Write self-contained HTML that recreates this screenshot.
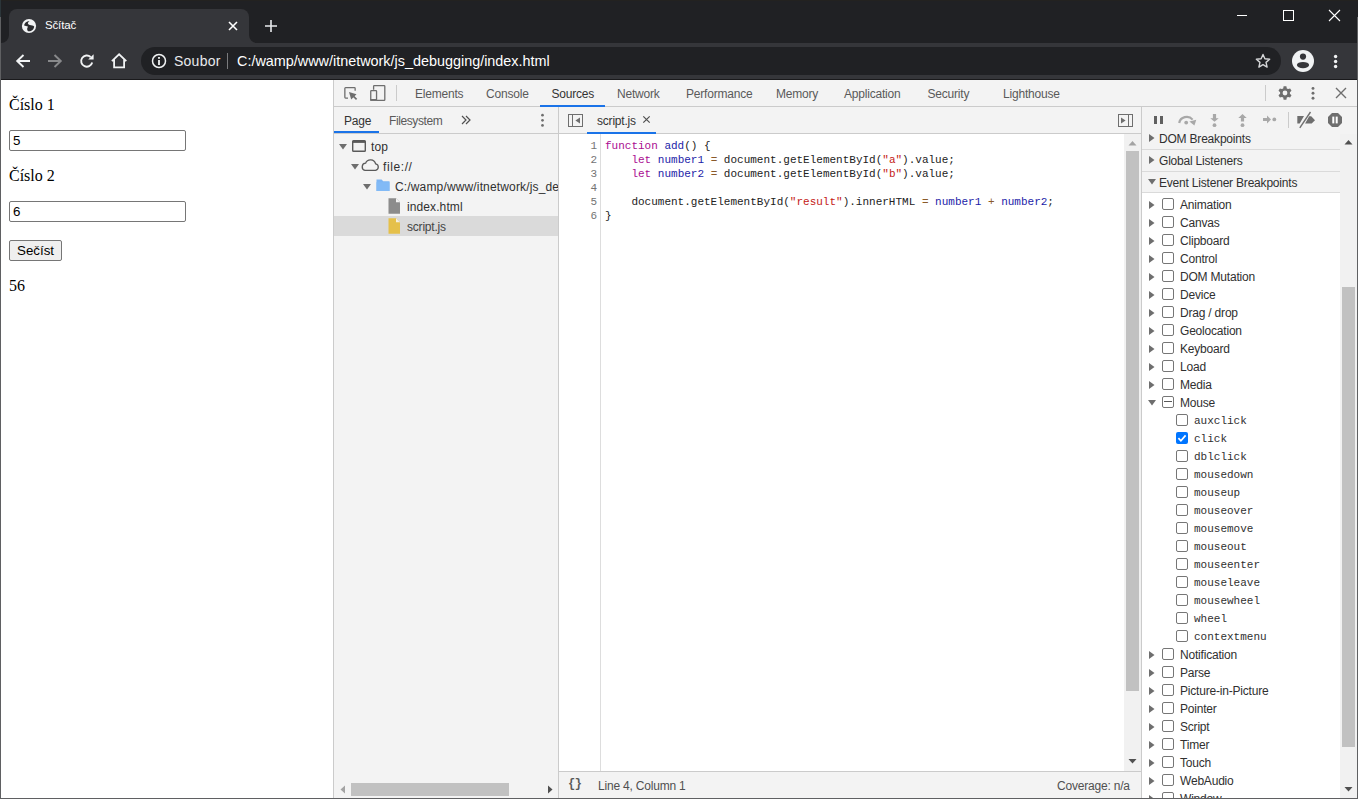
<!DOCTYPE html>
<html><head><meta charset="utf-8">
<style>
*{box-sizing:border-box;margin:0;padding:0}
html,body{width:1358px;height:799px;overflow:hidden;background:#202124;font-family:"Liberation Sans",sans-serif}
.a{position:absolute}
#win{position:absolute;left:0;top:0;width:1358px;height:799px;background:#202124}
.frameL{left:0;top:17px;width:1px;height:782px;background:#5f6062}
.frameR{left:1357px;top:17px;width:1px;height:782px;background:#5f6062}
.frameB{left:0;top:798px;width:1358px;height:1px;background:#5f6062}
#tab{left:9px;top:9px;width:240px;height:34px;background:#35363a;border-radius:8px 8px 0 0}
#toolbar{left:1px;top:43px;width:1356px;height:36px;background:#35363a}
#omni{left:141px;top:47px;width:1140px;height:28px;background:#202124;border-radius:14px}
#page{left:1px;top:80px;width:332px;height:718px;background:#fff}
#dt{left:333px;top:80px;width:1024px;height:718px;background:#f3f3f3;border-left:1px solid #cbcbcb}
.dtt{font-size:12px;line-height:15px;white-space:nowrap;letter-spacing:-0.2px}
.mono{font-family:"Liberation Mono",monospace;font-size:11px;line-height:14px;white-space:pre}
.code{color:#222}
.kw{color:#aa0d91}.op{color:#8a5a2a}.df{color:#1c1ca8}.st{color:#c41a16}
.cb{width:12px;height:12px;border:1px solid #767676;border-radius:2px;background:#fff}
.serif{font-family:"Liberation Serif",serif;font-size:16px;color:#000}
</style></head><body>
<div id="win">
  <!-- title bar -->
  <div class="a" id="tab"></div>
  <!-- tab bottom curves -->
  <svg class="a" style="left:1px;top:35px" width="8" height="8"><path d="M8 0 V8 H0 A8 8 0 0 0 8 0Z" fill="#35363a"/></svg>
  <svg class="a" style="left:249px;top:35px" width="8" height="8"><path d="M0 0 V8 H8 A8 8 0 0 1 0 0Z" fill="#35363a"/></svg>
  <!-- favicon globe -->
  <svg class="a" style="left:21px;top:18px" width="16" height="16" viewBox="0 0 16 16">
    <circle cx="8" cy="8" r="7.1" fill="#f1f3f4"/>
    <path d="M3.1 7.4 C3.2 5.2 5.2 3.2 8.6 2.9 C7.3 3.9 6.7 4.8 6.9 5.6 C7.2 6.5 8 7 8.8 7.1 C10.5 7.3 12 7.6 13.2 8.4 C13.1 10.6 11.6 12.6 9.2 13.2 L7.2 13.3 C6.3 12.3 6 11.2 6.2 10.4 C6.5 9.5 6.9 9 6.9 8.6 C5.5 8 4.3 7.6 3.1 7.4Z" fill="#2a2b2e"/>
  </svg>
  <div class="a" style="left:45px;top:19px;font-size:11.5px;color:#fff;letter-spacing:-0.15px">Sčítač</div>
  <!-- tab close -->
  <svg class="a" style="left:227px;top:20px" width="12" height="12" viewBox="0 0 12 12"><path d="M2 2 L10 10 M10 2 L2 10" stroke="#fff" stroke-width="1.6"/></svg>
  <!-- new tab -->
  <svg class="a" style="left:264px;top:19px" width="14" height="14" viewBox="0 0 14 14"><path d="M7 1 V13 M1 7 H13" stroke="#e8eaed" stroke-width="1.6"/></svg>
  <!-- window controls -->
  <div class="a" style="left:1237px;top:15px;width:10px;height:1px;background:#fff"></div>
  <div class="a" style="left:1283px;top:10px;width:11px;height:11px;border:1px solid #fff"></div>
  <svg class="a" style="left:1328px;top:9px" width="13" height="13" viewBox="0 0 13 13"><path d="M1 1 L12 12 M12 1 L1 12" stroke="#fff" stroke-width="1.1"/></svg>

  <div class="a" id="toolbar"></div>
  <!-- back -->
  <svg class="a" style="left:15px;top:53px" width="16" height="16" viewBox="0 0 16 16"><path d="M15 8 H2.5 M8.5 2 L2.2 8 L8.5 14" fill="none" stroke="#f1f3f4" stroke-width="1.9"/></svg>
  <!-- forward -->
  <svg class="a" style="left:47px;top:53px" width="16" height="16" viewBox="0 0 16 16"><path d="M1 8 H13.5 M7.5 2 L13.8 8 L7.5 14" fill="none" stroke="#88898b" stroke-width="1.9"/></svg>
  <!-- reload -->
  <svg class="a" style="left:79px;top:53px" width="16" height="16" viewBox="0 0 16 16"><path d="M13.2 9.5 A5.6 5.6 0 1 1 11.6 4" fill="none" stroke="#f1f3f4" stroke-width="1.9"/><path d="M9.2 6.6 H14.6 V1.2Z" fill="#f1f3f4"/></svg>
  <!-- home -->
  <svg class="a" style="left:110px;top:52px" width="18" height="17" viewBox="0 0 18 17"><path d="M1.9 9.2 L9.1 2.3 L16.3 9.2 M4.1 7.4 V15.3 H14.1 V7.4" fill="none" stroke="#f1f3f4" stroke-width="1.8" stroke-linejoin="miter"/></svg>
  <div class="a" id="omni"></div>
  <!-- info icon -->
  <svg class="a" style="left:151px;top:53px" width="16" height="16" viewBox="0 0 16 16"><circle cx="8" cy="8" r="6.5" fill="none" stroke="#f1f3f4" stroke-width="1.5"/><rect x="7.1" y="7" width="1.8" height="5" fill="#f1f3f4"/><rect x="7.1" y="4" width="1.8" height="1.8" fill="#f1f3f4"/></svg>
  <div class="a" style="left:174px;top:53px;font-size:14px;color:#e8eaed;letter-spacing:0.25px">Soubor</div>
  <div class="a" style="left:227px;top:53px;width:1px;height:16px;background:#7a7b7d"></div>
  <div class="a" style="left:237px;top:53px;font-size:14.4px;color:#fff;white-space:nowrap">C:/wamp/www/itnetwork/js_debugging/index.html</div>
  <!-- star -->
  <svg class="a" style="left:1254px;top:53px" width="18" height="17" viewBox="0 0 18 17"><path d="M9.00 1.40 L10.88 5.81 L15.66 6.24 L12.04 9.39 L13.11 14.06 L9.00 11.60 L4.89 14.06 L5.96 9.39 L2.34 6.24 L7.12 5.81Z" fill="none" stroke="#d5d6d8" stroke-width="1.4" stroke-linejoin="round"/></svg>
  <!-- profile -->
  <svg class="a" style="left:1291px;top:49px" width="24" height="24" viewBox="0 0 24 24"><circle cx="12" cy="12" r="11" fill="#f1f3f4"/><circle cx="12" cy="7.6" r="3.1" fill="#35363a"/><ellipse cx="12" cy="16.1" rx="6.1" ry="3.2" fill="#35363a"/></svg>
  <!-- kebab -->
  <svg class="a" style="left:1332px;top:53px" width="8" height="17" viewBox="0 0 8 17"><circle cx="3.6" cy="3.5" r="1.7" fill="#f1f3f4"/><circle cx="3.6" cy="8.5" r="1.7" fill="#f1f3f4"/><circle cx="3.6" cy="13.5" r="1.7" fill="#f1f3f4"/></svg>
  <div class="a" style="left:1px;top:79px;width:1356px;height:1px;background:#1a1a1c"></div>
  <div class="a" id="page"></div>
  <div class="a serif" style="left:9px;top:96px;line-height:18px">Číslo 1</div>
  <div class="a" style="left:9px;top:130px;width:177px;height:21px;border:1px solid #767676;border-radius:2px;background:#fff"></div>
  <div class="a" style="left:13px;top:133px;font-size:13.33px;line-height:15px;color:#000">5</div>
  <div class="a serif" style="left:9px;top:167px;line-height:18px">Číslo 2</div>
  <div class="a" style="left:9px;top:201px;width:177px;height:21px;border:1px solid #767676;border-radius:2px;background:#fff"></div>
  <div class="a" style="left:13px;top:204px;font-size:13.33px;line-height:15px;color:#000">6</div>
  <div class="a" style="left:9px;top:240px;width:53px;height:21px;border:1px solid #767676;border-radius:2px;background:#efefef"></div>
  <div class="a" style="left:17px;top:243px;font-size:13.33px;line-height:15px;color:#000">Sečíst</div>
  <div class="a serif" style="left:9px;top:277px;line-height:18px">56</div>
  <!--DT-->
<div class="a" style="left:333px;top:80px;width:1px;height:718px;background:#cbcbcb"></div>
<div class="a" style="left:334px;top:80px;width:1023px;height:26px;background:#f3f3f3"></div>
<div class="a" style="left:334px;top:106px;width:1023px;height:1px;background:#cbcbcb"></div>
<svg class="a" style="left:342px;top:85px" width="18" height="18" viewBox="0 0 18 18">
<path d="M6 13.05 H3.6 Q2.85 13.05 2.85 12.3 V3.4 Q2.85 2.65 3.6 2.65 H12.4 Q13.15 2.65 13.15 3.4 V5.8" fill="none" stroke="#6e6e6e" stroke-width="1.3"/>
<path d="M7 7 L14.5 9.3 L9.2 14.4Z" fill="#6e6e6e"/><path d="M10.8 10.6 L14.6 14.4" stroke="#6e6e6e" stroke-width="1.6"/></svg>
<svg class="a" style="left:368px;top:83px" width="19" height="20" viewBox="0 0 19 20">
<path d="M5.6 6.8 V3.3 Q5.6 2.7 6.2 2.7 H16.2 Q16.8 2.7 16.8 3.3 V16.8 Q16.8 17.4 16.2 17.4 H8.5" fill="none" stroke="#6e6e6e" stroke-width="1.3"/>
<rect x="2.75" y="7.6" width="5.8" height="9.6" rx="0.6" fill="none" stroke="#6e6e6e" stroke-width="1.3"/>
<rect x="2.2" y="16" width="6.8" height="1.8" fill="#6e6e6e"/></svg>
<div class="a" style="left:396px;top:85px;width:1px;height:16px;background:#cbcbcb"></div>
<div class="a dtt" style="left:415px;top:87px;color:#5a5a5a">Elements</div>
<div class="a dtt" style="left:486px;top:87px;color:#5a5a5a">Console</div>
<div class="a dtt" style="left:551.5px;top:87px;color:#333">Sources</div>
<div class="a dtt" style="left:617px;top:87px;color:#5a5a5a">Network</div>
<div class="a dtt" style="left:686px;top:87px;color:#5a5a5a">Performance</div>
<div class="a dtt" style="left:776px;top:87px;color:#5a5a5a">Memory</div>
<div class="a dtt" style="left:844px;top:87px;color:#5a5a5a">Application</div>
<div class="a dtt" style="left:927.5px;top:87px;color:#5a5a5a">Security</div>
<div class="a dtt" style="left:1003px;top:87px;color:#5a5a5a">Lighthouse</div>
<div class="a" style="left:540px;top:105px;width:65px;height:2px;background:#1a73e8"></div>
<div class="a" style="left:1265px;top:85px;width:1px;height:16px;background:#cbcbcb"></div>
<svg class="a" style="left:1277px;top:85px" width="16" height="16" viewBox="0 0 16 16">
<path fill="#6e6e6e" fill-rule="evenodd" d="M6.6 1.3 H9.4 L9.8 3.4 L11.1 4.1 L13.1 3.4 L14.5 5.8 L12.9 7.2 V8.8 L14.5 10.2 L13.1 12.6 L11.1 11.9 L9.8 12.6 L9.4 14.7 H6.6 L6.2 12.6 L4.9 11.9 L2.9 12.6 L1.5 10.2 L3.1 8.8 V7.2 L1.5 5.8 L2.9 3.4 L4.9 4.1 L6.2 3.4Z M8 5.6 A2.4 2.4 0 1 0 8 10.4 A2.4 2.4 0 1 0 8 5.6Z"/></svg>
<svg class="a" style="left:1310px;top:85px" width="6" height="16" viewBox="0 0 6 16"><circle cx="3" cy="3.4" r="1.45" fill="#6e6e6e"/><circle cx="3" cy="8.3" r="1.45" fill="#6e6e6e"/><circle cx="3" cy="13.3" r="1.45" fill="#6e6e6e"/></svg>
<svg class="a" style="left:1335px;top:87px" width="12" height="12" viewBox="0 0 12 12"><path d="M1 1 L11 11 M11 1 L1 11" stroke="#6e6e6e" stroke-width="1.4"/></svg>
<div class="a" style="left:334px;top:107px;width:1023px;height:26px;background:#f3f3f3"></div>
<div class="a" style="left:334px;top:133px;width:807px;height:1px;background:#cbcbcb"></div>
<div class="a" style="left:558px;top:107px;width:1px;height:691px;background:#cbcbcb"></div>
<div class="a" style="left:1141px;top:107px;width:1px;height:691px;background:#cbcbcb"></div>
<div class="a dtt" style="left:344px;top:114px;color:#333">Page</div>
<div class="a dtt" style="left:389px;top:114px;color:#5a5a5a;letter-spacing:-0.4px">Filesystem</div>
<div class="a" style="left:334px;top:131px;width:45px;height:2px;background:#1a73e8"></div>
<svg class="a" style="left:460px;top:114px" width="12" height="12" viewBox="0 0 12 12"><path d="M2 2 L6 6 L2 10 M6 2 L10 6 L6 10" fill="none" stroke="#505050" stroke-width="1.2"/></svg>
<svg class="a" style="left:539px;top:112px" width="6" height="16" viewBox="0 0 6 16"><circle cx="3.5" cy="3.2" r="1.35" fill="#6e6e6e"/><circle cx="3.5" cy="8.3" r="1.35" fill="#6e6e6e"/><circle cx="3.5" cy="13.4" r="1.35" fill="#6e6e6e"/></svg>
<svg class="a" style="left:567px;top:113px" width="17" height="15" viewBox="0 0 17 15"><rect x="1.5" y="1.5" width="14" height="12" fill="none" stroke="#6e6e6e" stroke-width="1"/><path d="M5.5 1.5 V13.5" stroke="#6e6e6e" stroke-width="1"/><path d="M13 4.6 V10.6 L8.4 7.6Z" fill="#6e6e6e"/></svg>
<div class="a dtt" style="left:597px;top:114px;color:#333">script.js</div>
<svg class="a" style="left:642px;top:115px" width="9" height="9" viewBox="0 0 9 9"><path d="M1.3 1.3 L7.7 7.7 M7.7 1.3 L1.3 7.7" stroke="#505050" stroke-width="1.2"/></svg>
<div class="a" style="left:587px;top:132px;width:69px;height:2px;background:#1a73e8"></div>
<svg class="a" style="left:1117px;top:113px" width="17" height="15" viewBox="0 0 17 15"><rect x="1.5" y="1.5" width="14" height="12" fill="none" stroke="#6e6e6e" stroke-width="1"/><path d="M11.5 1.5 V13.5" stroke="#6e6e6e" stroke-width="1"/><path d="M4 4.6 V10.6 L8.6 7.6Z" fill="#6e6e6e"/></svg>
<div class="a" style="left:1154px;top:116px;width:3px;height:8px;background:#606060"></div>
<div class="a" style="left:1160px;top:116px;width:3px;height:8px;background:#606060"></div>
<svg class="a" style="left:1174px;top:108px" width="110" height="24" viewBox="1174 108 110 24">
<path d="M1179.2 123 A7.6 7.2 0 0 1 1192.6 119.6" fill="none" stroke="#a8a8a8" stroke-width="2.2"/>
<path d="M1189.4 121.6 L1196.3 119.8 L1194.4 125.6Z" fill="#a8a8a8"/><circle cx="1186.2" cy="122.6" r="1.9" fill="#a8a8a8"/>
<path d="M1212.9 114 H1216.1 V118.2 H1218.7 L1214.5 121.8 L1210.3 118.2 H1212.9Z" fill="#a8a8a8"/><circle cx="1214.5" cy="125.2" r="1.9" fill="#a8a8a8"/>
<path d="M1242.5 114 L1246.7 118 H1244.1 V121.6 H1240.9 V118 H1238.3Z" fill="#a8a8a8"/><circle cx="1242.5" cy="125.2" r="1.9" fill="#a8a8a8"/>
<path d="M1263 118 H1267 V115.6 L1271 119.5 L1267 123.4 V121 H1263Z" fill="#a8a8a8"/><circle cx="1274.3" cy="119.4" r="1.9" fill="#a8a8a8"/>
</svg>
<div class="a" style="left:1288px;top:112px;width:1px;height:16px;background:#cbcbcb"></div>
<svg class="a" style="left:1296px;top:111px" width="20" height="18" viewBox="0 0 20 18"><path d="M1.3 5 H8 L3.7 12.6 H1.3Z" fill="#6e6e6e"/><path d="M13.2 5.2 H15.2 L19 9.2 L15.7 12.6 H9.1Z" fill="#6e6e6e"/><path d="M3.8 16.8 L14.5 1.0" stroke="#6e6e6e" stroke-width="1.4"/></svg>
<svg class="a" style="left:1327px;top:112px" width="16" height="16" viewBox="0 0 16 16"><path d="M5 1 H11 L15 5 V11 L11 15 H5 L1 11 V5Z" fill="#6e6e6e"/><rect x="5.3" y="4.6" width="2" height="6.8" fill="#fff"/><rect x="8.7" y="4.6" width="2" height="6.8" fill="#fff"/></svg>
<div class="a" style="left:334px;top:134px;width:224px;height:664px;background:#f3f3f3"></div>
<div class="a" style="left:334px;top:216px;width:224px;height:20px;background:#dadada"></div>
<svg class="a" style="left:339px;top:144px" width="8" height="6" viewBox="0 0 8 6"><path d="M0 0 H8 L4 5.5Z" fill="#6e6e6e"/></svg>
<svg class="a" style="left:351px;top:139px" width="16" height="14" viewBox="0 0 16 14"><rect x="1.7" y="1.7" width="12.6" height="10.6" rx="0.8" fill="none" stroke="#5a5a5a" stroke-width="1.4"/><rect x="1.7" y="1.7" width="12.6" height="2.2" fill="#5a5a5a"/></svg>
<div class="a dtt" style="left:371px;top:140px;color:#303030;letter-spacing:0.1px">top</div>
<svg class="a" style="left:351px;top:164px" width="8" height="6" viewBox="0 0 8 6"><path d="M0 0 H8 L4 5.5Z" fill="#6e6e6e"/></svg>
<svg class="a" style="left:360px;top:158px" width="20" height="14" viewBox="0 0 20 14"><path d="M5 12.3 H15.5 A3.3 3.3 0 0 0 15.6 5.8 A5.3 5.3 0 0 0 5.6 5.2 A3.6 3.6 0 0 0 5 12.3Z" fill="none" stroke="#5a5a5a" stroke-width="1.3"/></svg>
<div class="a dtt" style="left:383px;top:160px;color:#303030;letter-spacing:0.6px">file://</div>
<svg class="a" style="left:363px;top:184px" width="8" height="6" viewBox="0 0 8 6"><path d="M0 0 H8 L4 5.5Z" fill="#6e6e6e"/></svg>
<svg class="a" style="left:375px;top:178px" width="16" height="14" viewBox="0 0 16 14"><path d="M1.5 1.5 H6.6 L8.2 3.3 H14.5 V13 H1.5Z" fill="#7eb6f4"/><rect x="1.5" y="4.2" width="13" height="8.8" fill="#82baf6"/></svg>
<div class="a dtt" style="left:395px;top:180px;color:#303030;white-space:nowrap;width:163px;overflow:hidden;letter-spacing:0.15px">C:/wamp/www/itnetwork/js_debugging</div>
<svg class="a" style="left:387px;top:198px" width="14" height="16" viewBox="0 0 14 16"><path d="M1.5 0.3 H9 L13 4.3 V15.7 H1.5Z" fill="#8c8c8c"/><path d="M9 0.3 V4.3 H13Z" fill="#f3f3f3"/></svg>
<div class="a dtt" style="left:407px;top:200px;color:#303030;letter-spacing:0.1px">index.html</div>
<svg class="a" style="left:387px;top:218px" width="14" height="16" viewBox="0 0 14 16"><path d="M1.5 0.3 H9 L13 4.3 V15.7 H1.5Z" fill="#e5c04a"/><path d="M9 0.3 V4.3 H13Z" fill="#f5f0e0"/></svg>
<div class="a dtt" style="left:407px;top:220px;color:#444">script.js</div>
<svg class="a" style="left:339px;top:785px" width="8" height="9" viewBox="0 0 8 9"><path d="M6 0.5 V8.5 L1.5 4.5Z" fill="#a3a3a3"/></svg>
<div class="a" style="left:351px;top:783px;width:158px;height:13px;background:#c1c1c1"></div>
<svg class="a" style="left:546px;top:785px" width="8" height="9" viewBox="0 0 8 9"><path d="M2 0.5 V8.5 L6.5 4.5Z" fill="#505050"/></svg>
<div class="a" style="left:559px;top:134px;width:582px;height:637px;background:#fff"></div>
<div class="a" style="left:600px;top:134px;width:1px;height:637px;background:#dddddd"></div>
<div class="a mono" style="left:580px;top:139px;width:17px;text-align:right;color:#737373">1</div>
<div class="a mono" style="left:580px;top:153px;width:17px;text-align:right;color:#737373">2</div>
<div class="a mono" style="left:580px;top:167px;width:17px;text-align:right;color:#737373">3</div>
<div class="a mono" style="left:580px;top:181px;width:17px;text-align:right;color:#737373">4</div>
<div class="a mono" style="left:580px;top:195px;width:17px;text-align:right;color:#737373">5</div>
<div class="a mono" style="left:580px;top:209px;width:17px;text-align:right;color:#737373">6</div>
<div class="a mono code" style="left:605px;top:139px"><span class="kw">function</span> <span class="df">add</span>() {</div>
<div class="a mono code" style="left:605px;top:153px">    <span class="kw">let</span> <span class="df">number1</span> <span class="op">=</span> document.getElementById(<span class="st">"a"</span>).value;</div>
<div class="a mono code" style="left:605px;top:167px">    <span class="kw">let</span> <span class="df">number2</span> <span class="op">=</span> document.getElementById(<span class="st">"b"</span>).value;</div>
<div class="a mono code" style="left:605px;top:181px"></div>
<div class="a mono code" style="left:605px;top:195px">    document.getElementById(<span class="st">"result"</span>).innerHTML <span class="op">=</span> <span class="df">number1</span> <span class="op">+</span> <span class="df">number2</span>;</div>
<div class="a mono code" style="left:605px;top:209px">}</div>
<div class="a" style="left:1124px;top:134px;width:17px;height:637px;background:#f1f1f1"></div>
<svg class="a" style="left:1128px;top:140px" width="9" height="7" viewBox="0 0 9 7"><path d="M0.5 5.5 H8.5 L4.5 1Z" fill="#a3a3a3"/></svg>
<div class="a" style="left:1126px;top:151px;width:13px;height:540px;background:#c1c1c1"></div>
<svg class="a" style="left:1128px;top:758px" width="9" height="7" viewBox="0 0 9 7"><path d="M0.5 1 H8.5 L4.5 5.5Z" fill="#505050"/></svg>
<div class="a" style="left:559px;top:771px;width:582px;height:1px;background:#cbcbcb"></div>
<div class="a" style="left:559px;top:772px;width:582px;height:26px;background:#f3f3f3"></div>
<div class="a" style="left:568px;top:777px;font:bold 12px 'Liberation Mono',monospace;color:#5a5a5a;letter-spacing:-0.5px">{}</div>
<div class="a dtt" style="left:598px;top:779px;color:#505050">Line 4, Column 1</div>
<div class="a dtt" style="left:1057px;top:779px;color:#505050">Coverage: n/a</div>
<div class="a" style="left:1142px;top:134px;width:198px;height:664px;background:#fff"></div>
<div class="a" style="left:1142px;top:130px;width:198px;height:19px;background:#f3f3f3"></div>
<div class="a" style="left:1142px;top:149px;width:198px;height:1px;background:#dadada"></div>
<div class="a" style="left:1142px;top:150px;width:198px;height:21px;background:#f3f3f3"></div>
<div class="a" style="left:1142px;top:171px;width:198px;height:1px;background:#dadada"></div>
<div class="a" style="left:1142px;top:172px;width:198px;height:20px;background:#f3f3f3"></div>
<div class="a" style="left:1142px;top:192px;width:198px;height:1px;background:#dadada"></div>
<div class="a" style="left:1142px;top:130px;width:215px;height:4px;background:#f3f3f3"></div>
<svg class="a" style="left:1149px;top:134px" width="6" height="8" viewBox="0 0 6 8"><path d="M0 0 V8 L5.5 4Z" fill="#6e6e6e"/></svg>
<div class="a dtt" style="left:1159px;top:132px;color:#303030">DOM Breakpoints</div>
<svg class="a" style="left:1149px;top:156px" width="6" height="8" viewBox="0 0 6 8"><path d="M0 0 V8 L5.5 4Z" fill="#6e6e6e"/></svg>
<div class="a dtt" style="left:1159px;top:154px;color:#303030">Global Listeners</div>
<svg class="a" style="left:1148px;top:179px" width="8" height="6" viewBox="0 0 8 6"><path d="M0 0 H8 L4 5.5Z" fill="#6e6e6e"/></svg>
<div class="a dtt" style="left:1159px;top:176px;color:#303030">Event Listener Breakpoints</div>
<svg class="a" style="left:1149px;top:201px" width="6" height="8" viewBox="0 0 6 8"><path d="M0 0 V8 L5.5 4Z" fill="#6e6e6e"/></svg>
<div class="a cb" style="left:1162px;top:198px"></div>
<div class="a dtt" style="left:1180px;top:198px;color:#303030">Animation</div>
<svg class="a" style="left:1149px;top:219px" width="6" height="8" viewBox="0 0 6 8"><path d="M0 0 V8 L5.5 4Z" fill="#6e6e6e"/></svg>
<div class="a cb" style="left:1162px;top:216px"></div>
<div class="a dtt" style="left:1180px;top:216px;color:#303030">Canvas</div>
<svg class="a" style="left:1149px;top:237px" width="6" height="8" viewBox="0 0 6 8"><path d="M0 0 V8 L5.5 4Z" fill="#6e6e6e"/></svg>
<div class="a cb" style="left:1162px;top:234px"></div>
<div class="a dtt" style="left:1180px;top:234px;color:#303030">Clipboard</div>
<svg class="a" style="left:1149px;top:255px" width="6" height="8" viewBox="0 0 6 8"><path d="M0 0 V8 L5.5 4Z" fill="#6e6e6e"/></svg>
<div class="a cb" style="left:1162px;top:252px"></div>
<div class="a dtt" style="left:1180px;top:252px;color:#303030">Control</div>
<svg class="a" style="left:1149px;top:273px" width="6" height="8" viewBox="0 0 6 8"><path d="M0 0 V8 L5.5 4Z" fill="#6e6e6e"/></svg>
<div class="a cb" style="left:1162px;top:270px"></div>
<div class="a dtt" style="left:1180px;top:270px;color:#303030">DOM Mutation</div>
<svg class="a" style="left:1149px;top:291px" width="6" height="8" viewBox="0 0 6 8"><path d="M0 0 V8 L5.5 4Z" fill="#6e6e6e"/></svg>
<div class="a cb" style="left:1162px;top:288px"></div>
<div class="a dtt" style="left:1180px;top:288px;color:#303030">Device</div>
<svg class="a" style="left:1149px;top:309px" width="6" height="8" viewBox="0 0 6 8"><path d="M0 0 V8 L5.5 4Z" fill="#6e6e6e"/></svg>
<div class="a cb" style="left:1162px;top:306px"></div>
<div class="a dtt" style="left:1180px;top:306px;color:#303030">Drag / drop</div>
<svg class="a" style="left:1149px;top:327px" width="6" height="8" viewBox="0 0 6 8"><path d="M0 0 V8 L5.5 4Z" fill="#6e6e6e"/></svg>
<div class="a cb" style="left:1162px;top:324px"></div>
<div class="a dtt" style="left:1180px;top:324px;color:#303030">Geolocation</div>
<svg class="a" style="left:1149px;top:345px" width="6" height="8" viewBox="0 0 6 8"><path d="M0 0 V8 L5.5 4Z" fill="#6e6e6e"/></svg>
<div class="a cb" style="left:1162px;top:342px"></div>
<div class="a dtt" style="left:1180px;top:342px;color:#303030">Keyboard</div>
<svg class="a" style="left:1149px;top:363px" width="6" height="8" viewBox="0 0 6 8"><path d="M0 0 V8 L5.5 4Z" fill="#6e6e6e"/></svg>
<div class="a cb" style="left:1162px;top:360px"></div>
<div class="a dtt" style="left:1180px;top:360px;color:#303030">Load</div>
<svg class="a" style="left:1149px;top:381px" width="6" height="8" viewBox="0 0 6 8"><path d="M0 0 V8 L5.5 4Z" fill="#6e6e6e"/></svg>
<div class="a cb" style="left:1162px;top:378px"></div>
<div class="a dtt" style="left:1180px;top:378px;color:#303030">Media</div>
<svg class="a" style="left:1148px;top:400px" width="8" height="6" viewBox="0 0 8 6"><path d="M0 0 H8 L4 5.5Z" fill="#6e6e6e"/></svg>
<div class="a cb" style="left:1162px;top:396px"></div>
<div class="a" style="left:1164px;top:401px;width:8px;height:1.2px;background:#5a5a5a"></div>
<div class="a dtt" style="left:1180px;top:396px;color:#303030">Mouse</div>
<div class="a cb" style="left:1176px;top:414px"></div>
<div class="a mono" style="left:1194px;top:414px;color:#303030">auxclick</div>
<svg class="a" style="left:1176px;top:432px" width="12" height="12" viewBox="0 0 12 12"><rect x="0" y="0" width="12" height="12" rx="2" fill="#0075ff"/><path d="M2.4 6.2 L4.9 8.8 L9.6 3.4" fill="none" stroke="#fff" stroke-width="1.7"/></svg>
<div class="a mono" style="left:1194px;top:432px;color:#303030">click</div>
<div class="a cb" style="left:1176px;top:450px"></div>
<div class="a mono" style="left:1194px;top:450px;color:#303030">dblclick</div>
<div class="a cb" style="left:1176px;top:468px"></div>
<div class="a mono" style="left:1194px;top:468px;color:#303030">mousedown</div>
<div class="a cb" style="left:1176px;top:486px"></div>
<div class="a mono" style="left:1194px;top:486px;color:#303030">mouseup</div>
<div class="a cb" style="left:1176px;top:504px"></div>
<div class="a mono" style="left:1194px;top:504px;color:#303030">mouseover</div>
<div class="a cb" style="left:1176px;top:522px"></div>
<div class="a mono" style="left:1194px;top:522px;color:#303030">mousemove</div>
<div class="a cb" style="left:1176px;top:540px"></div>
<div class="a mono" style="left:1194px;top:540px;color:#303030">mouseout</div>
<div class="a cb" style="left:1176px;top:558px"></div>
<div class="a mono" style="left:1194px;top:558px;color:#303030">mouseenter</div>
<div class="a cb" style="left:1176px;top:576px"></div>
<div class="a mono" style="left:1194px;top:576px;color:#303030">mouseleave</div>
<div class="a cb" style="left:1176px;top:594px"></div>
<div class="a mono" style="left:1194px;top:594px;color:#303030">mousewheel</div>
<div class="a cb" style="left:1176px;top:612px"></div>
<div class="a mono" style="left:1194px;top:612px;color:#303030">wheel</div>
<div class="a cb" style="left:1176px;top:630px"></div>
<div class="a mono" style="left:1194px;top:630px;color:#303030">contextmenu</div>
<svg class="a" style="left:1149px;top:651px" width="6" height="8" viewBox="0 0 6 8"><path d="M0 0 V8 L5.5 4Z" fill="#6e6e6e"/></svg>
<div class="a cb" style="left:1162px;top:648px"></div>
<div class="a dtt" style="left:1180px;top:648px;color:#303030">Notification</div>
<svg class="a" style="left:1149px;top:669px" width="6" height="8" viewBox="0 0 6 8"><path d="M0 0 V8 L5.5 4Z" fill="#6e6e6e"/></svg>
<div class="a cb" style="left:1162px;top:666px"></div>
<div class="a dtt" style="left:1180px;top:666px;color:#303030">Parse</div>
<svg class="a" style="left:1149px;top:687px" width="6" height="8" viewBox="0 0 6 8"><path d="M0 0 V8 L5.5 4Z" fill="#6e6e6e"/></svg>
<div class="a cb" style="left:1162px;top:684px"></div>
<div class="a dtt" style="left:1180px;top:684px;color:#303030">Picture-in-Picture</div>
<svg class="a" style="left:1149px;top:705px" width="6" height="8" viewBox="0 0 6 8"><path d="M0 0 V8 L5.5 4Z" fill="#6e6e6e"/></svg>
<div class="a cb" style="left:1162px;top:702px"></div>
<div class="a dtt" style="left:1180px;top:702px;color:#303030">Pointer</div>
<svg class="a" style="left:1149px;top:723px" width="6" height="8" viewBox="0 0 6 8"><path d="M0 0 V8 L5.5 4Z" fill="#6e6e6e"/></svg>
<div class="a cb" style="left:1162px;top:720px"></div>
<div class="a dtt" style="left:1180px;top:720px;color:#303030">Script</div>
<svg class="a" style="left:1149px;top:741px" width="6" height="8" viewBox="0 0 6 8"><path d="M0 0 V8 L5.5 4Z" fill="#6e6e6e"/></svg>
<div class="a cb" style="left:1162px;top:738px"></div>
<div class="a dtt" style="left:1180px;top:738px;color:#303030">Timer</div>
<svg class="a" style="left:1149px;top:759px" width="6" height="8" viewBox="0 0 6 8"><path d="M0 0 V8 L5.5 4Z" fill="#6e6e6e"/></svg>
<div class="a cb" style="left:1162px;top:756px"></div>
<div class="a dtt" style="left:1180px;top:756px;color:#303030">Touch</div>
<svg class="a" style="left:1149px;top:777px" width="6" height="8" viewBox="0 0 6 8"><path d="M0 0 V8 L5.5 4Z" fill="#6e6e6e"/></svg>
<div class="a cb" style="left:1162px;top:774px"></div>
<div class="a dtt" style="left:1180px;top:774px;color:#303030">WebAudio</div>
<svg class="a" style="left:1149px;top:795px" width="6" height="8" viewBox="0 0 6 8"><path d="M0 0 V8 L5.5 4Z" fill="#6e6e6e"/></svg>
<div class="a cb" style="left:1162px;top:792px"></div>
<div class="a dtt" style="left:1180px;top:792px;color:#303030">Window</div>
<div class="a" style="left:1340px;top:134px;width:17px;height:664px;background:#f1f1f1"></div>
<svg class="a" style="left:1344px;top:139px" width="9" height="7" viewBox="0 0 9 7"><path d="M0.5 5.5 H8.5 L4.5 1Z" fill="#505050"/></svg>
<div class="a" style="left:1342px;top:287px;width:13px;height:460px;background:#c1c1c1"></div>
<svg class="a" style="left:1344px;top:786px" width="9" height="7" viewBox="0 0 9 7"><path d="M0.5 1 H8.5 L4.5 5.5Z" fill="#505050"/></svg>
<!--/DT-->
  <div class="a frameL"></div><div class="a" style="left:0;top:0;width:1px;height:17px;background:#2b3539"></div><div class="a" style="left:1px;top:0;width:1357px;height:1px;background:#232220"></div><div class="a frameR"></div><div class="a frameB"></div>
</div>
</body></html>
